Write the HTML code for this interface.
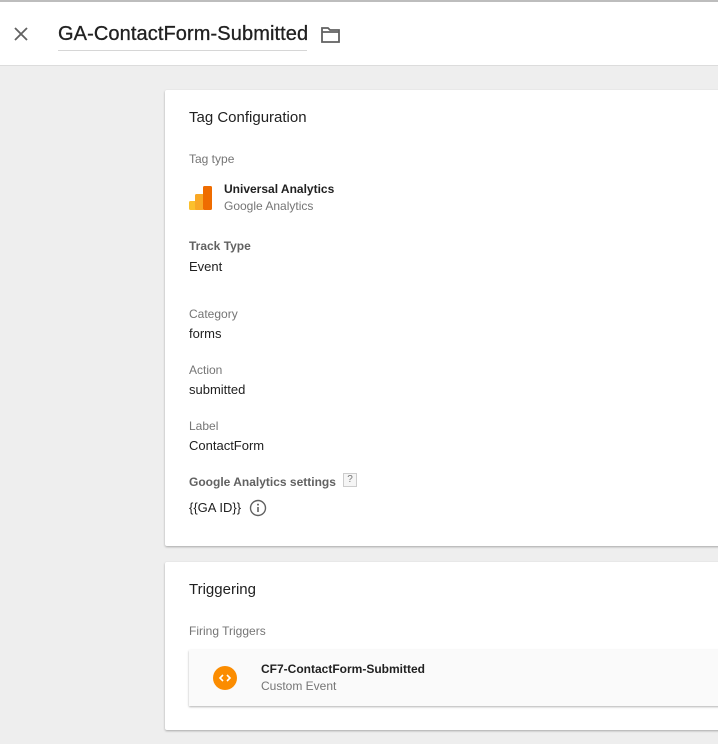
<!DOCTYPE html>
<html><head><meta charset="utf-8"><style>
*{margin:0;padding:0;box-sizing:border-box}
body{width:718px;height:744px;overflow:hidden;background:#eeeeee;font-family:"Liberation Sans",sans-serif;position:relative}
.hdr{position:absolute;left:0;top:0;width:718px;height:66px;background:#fff;border-top:2px solid #bdbdbd;border-bottom:1px solid #dcdcdc}
.abs{position:absolute;white-space:nowrap}
.card{position:absolute;left:165px;width:560px;background:#fff;border-radius:2px;box-shadow:0 1px 2px rgba(0,0,0,.3)}
.lbl{font-size:12px;color:#757575}
.lblb{font-size:12px;color:#616161;font-weight:bold}
.val{font-size:13px;color:#212121}
</style></head><body>
<div class="hdr"></div>
<svg class="abs" style="left:13px;top:26px" width="16" height="16" viewBox="0 0 16 16"><path d="M2 2L14 14M14 2L2 14" stroke="#616161" stroke-width="1.8"/></svg>
<div class="abs" style="left:58px;top:23px;font-size:20px;color:#212121;letter-spacing:0.1px;-webkit-text-stroke:0.3px #212121">GA-ContactForm-Submitted</div>
<div class="abs" style="left:58px;top:50px;width:249px;height:1px;background:#d6d6d6"></div>
<svg class="abs" style="left:320px;top:26px" width="22" height="18" viewBox="0 0 22 18"><path d="M2 2h6l2 2h9v12H2z M2 6h17" fill="none" stroke="#616161" stroke-width="1.8"/></svg>

<div class="card" style="top:90px;height:456px">
<div class="abs" style="left:24px;top:19px;font-size:15px;color:#212121">Tag Configuration</div>
<div class="abs lbl" style="left:24px;top:62px">Tag type</div>
<svg class="abs" style="left:24px;top:96px" width="24" height="24" viewBox="0 0 24 24"><rect x="0" y="15" width="9" height="9" rx="1.5" fill="#fbc02d"/><rect x="6" y="8" width="9" height="16" rx="1.5" fill="#f9a825"/><rect x="14" y="0" width="9" height="24" rx="1.5" fill="#ef6c00"/></svg>
<div class="abs" style="left:59px;top:92px;font-size:12px;font-weight:bold;color:#212121">Universal Analytics</div>
<div class="abs lbl" style="left:59px;top:109px;color:#757575">Google Analytics</div>
<div class="abs lblb" style="left:24px;top:149px">Track Type</div>
<div class="abs val" style="left:24px;top:169px">Event</div>
<div class="abs lbl" style="left:24px;top:217px">Category</div>
<div class="abs val" style="left:24px;top:236px">forms</div>
<div class="abs lbl" style="left:24px;top:273px">Action</div>
<div class="abs val" style="left:24px;top:292px">submitted</div>
<div class="abs lbl" style="left:24px;top:329px">Label</div>
<div class="abs val" style="left:24px;top:348px">ContactForm</div>
<div class="abs lblb" style="left:24px;top:385px">Google Analytics settings</div>
<div class="abs" style="left:178px;top:383px;width:14px;height:14px;border:1px solid #ccc;background:#f5f5f5;font-size:10px;color:#757575;text-align:center;line-height:12px">?</div>
<div class="abs val" style="left:24px;top:410px">{{GA ID}}</div>
<svg class="abs" style="left:84px;top:409px" width="18" height="18" viewBox="0 0 18 18"><circle cx="9" cy="9" r="7.5" fill="none" stroke="#616161" stroke-width="1.4"/><rect x="8.2" y="8" width="1.6" height="5" fill="#616161"/><circle cx="9" cy="5.6" r="1" fill="#616161"/></svg>
</div>

<div class="card" style="top:562px;height:168px">
<div class="abs" style="left:24px;top:19px;font-size:15px;color:#212121">Triggering</div>
<div class="abs lbl" style="left:24px;top:62px">Firing Triggers</div>
<div class="abs" style="left:24px;top:88px;width:540px;height:56px;background:#fafafa;box-shadow:0 1px 2px rgba(0,0,0,.3)">
<div class="abs" style="left:24px;top:16px;width:24px;height:24px;border-radius:50%;background:#fb8c00"></div>
<svg class="abs" style="left:24px;top:16px" width="24" height="24" viewBox="0 0 24 24"><path d="M10 9l-3 3 3 3M14 9l3 3-3 3" fill="none" stroke="#fff" stroke-width="1.6"/></svg>
<div class="abs" style="left:72px;top:12px;font-size:12px;font-weight:bold;color:#212121">CF7-ContactForm-Submitted</div>
<div class="abs lbl" style="left:72px;top:29px">Custom Event</div>
</div>
</div>
</body></html>
